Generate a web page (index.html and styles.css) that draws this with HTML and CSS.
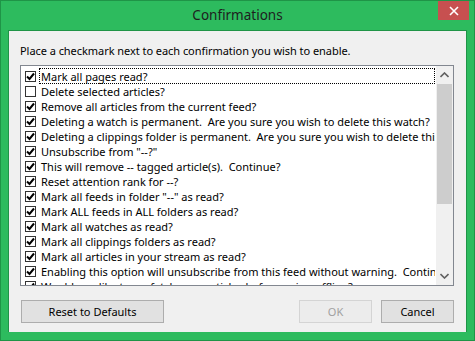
FILE: index.html
```html
<!DOCTYPE html>
<html lang="en">
<head>
    <meta charset="UTF-8">
    <title>Confirmations</title>
    <link rel="stylesheet" href="styles.css">
</head>
<body>
    <div class="window">
        <div class="titlebar">
            <span class="title">Confirmations</span>
            <button class="close-btn">
                <svg width="10" height="10" viewBox="0 0 10 10"><path d="M1 1L9 9M9 1L1 9" stroke="#fff" stroke-width="1.6"/></svg>
            </button>
        </div>
        <div class="client">
            <p class="intro">Place a checkmark next to each confirmation you wish to enable.</p>
            <div class="list">
                <div class="rows">
                    <div class="row focused"><span class="box checked"></span><span class="label">Mark all pages read?</span></div>
                    <div class="row"><span class="box"></span><span class="label">Delete selected articles?</span></div>
                    <div class="row"><span class="box checked"></span><span class="label">Remove all articles from the current feed?</span></div>
                    <div class="row"><span class="box checked"></span><span class="label">Deleting a watch is permanent.&nbsp; Are you sure you wish to delete this watch?</span></div>
                    <div class="row"><span class="box checked"></span><span class="label">Deleting a clippings folder is permanent.&nbsp; Are you sure you wish to delete this clippings folder?</span></div>
                    <div class="row"><span class="box checked"></span><span class="label">Unsubscribe from "--?"</span></div>
                    <div class="row"><span class="box checked"></span><span class="label">This will remove -- tagged article(s).&nbsp; Continue?</span></div>
                    <div class="row"><span class="box checked"></span><span class="label">Reset attention rank for --?</span></div>
                    <div class="row"><span class="box checked"></span><span class="label">Mark all feeds in folder "--" as read?</span></div>
                    <div class="row"><span class="box checked"></span><span class="label">Mark ALL feeds in ALL folders as read?</span></div>
                    <div class="row"><span class="box checked"></span><span class="label">Mark all watches as read?</span></div>
                    <div class="row"><span class="box checked"></span><span class="label">Mark all clippings folders as read?</span></div>
                    <div class="row"><span class="box checked"></span><span class="label">Mark all articles in your stream as read?</span></div>
                    <div class="row"><span class="box checked"></span><span class="label">Enabling this option will unsubscribe from this feed without warning.&nbsp; Continue?</span></div>
                    <div class="row"><span class="box checked"></span><span class="label">Would you like to prefetch your articles before going offline?</span></div>
                </div>
                <div class="scrollbar">
                    <div class="arrow">
                        <svg width="9" height="6" viewBox="0 0 9 6"><path d="M0.5 5L4.5 1L8.5 5" fill="none" stroke="#606060" stroke-width="1.6"/></svg>
                    </div>
                    <div class="track"><div class="thumb"></div></div>
                    <div class="arrow">
                        <svg width="9" height="6" viewBox="0 0 9 6"><path d="M0.5 1L4.5 5L8.5 1" fill="none" stroke="#606060" stroke-width="1.6"/></svg>
                    </div>
                </div>
            </div>
            <div class="actions">
                <button class="btn reset">Reset to Defaults</button>
                <div class="spacer"></div>
                <button class="btn" disabled>OK</button>
                <button class="btn">Cancel</button>
            </div>
        </div>
    </div>
</body>
</html>
```

FILE: styles.css
```css
:root {
    --frame: #2dbb5e;
    --frame-edge: #1f9447;
    --client-bg: #f0f0f0;
    --list-border: #828790;
    --btn-bg: #e1e1e1;
    --btn-border: #adadad;
    --font-main: "Noto Sans", "Open Sans", sans-serif;
}
* { box-sizing: border-box; }
body {
    margin: 0;
    font-family: var(--font-main);
    font-size: 11px;
    color: #000;
}
.window {
    width: 475px;
    height: 341px;
    background: var(--frame);
    border: 1px solid var(--frame-edge);
    display: flex;
    flex-direction: column;
}
.titlebar {
    height: 29px;
    position: relative;
    display: flex;
    justify-content: center;
    align-items: center;
}
.title {
    font-size: 13.5px;
    color: #1e1e1e;
    margin-top: -1px;
}
.close-btn {
    position: absolute;
    top: 0;
    right: 5px;
    width: 31px;
    height: 19px;
    border: none;
    background: #c75050;
    display: flex;
    align-items: center;
    justify-content: center;
    padding: 0;
}
.client {
    margin: 0 7px 8px 7px;
    flex: 1;
    background: var(--client-bg);
    border: 1px solid #1f9447;
    border-width: 1px 1px 0 1px;
    padding: 12px 12px 8px 11px;
    display: flex;
    flex-direction: column;
}
.intro {
    margin: 0 0 6px 0;
    line-height: 16px;
    letter-spacing: -0.05px;
}
.list {
    height: 221px;
    background: #fff;
    border: 1px solid var(--list-border);
    display: flex;
    overflow: hidden;
}
.rows {
    flex: 1;
    padding: 2px 1px 0 4px;
    overflow: hidden;
}
.row {
    height: 15px;
    white-space: nowrap;
    display: flex;
    align-items: center;
    gap: 3px;
}
.label {
    flex: 1;
    line-height: 15px;
    padding: 1px 0 0 2px;
    overflow: hidden;
}
.row.focused .label {
    outline: 1px dotted #000;
    outline-offset: -1px;
}
.box {
    width: 11px;
    height: 11px;
    border: 1px solid #333;
    background: #fff;
    flex-shrink: 0;
    margin-top: 1px;
}
.box.checked {
    background: #fff url("data:image/svg+xml,%3Csvg xmlns='http://www.w3.org/2000/svg' width='9' height='9' viewBox='0 0 9 9'%3E%3Cpath d='M1 4.5L3.5 7L8 1.5' fill='none' stroke='%23000' stroke-width='2'/%3E%3C/svg%3E") center no-repeat;
}
.scrollbar {
    width: 17px;
    flex-shrink: 0;
    background: #f0f0f0;
    display: flex;
    flex-direction: column;
    padding-bottom: 1px;
}
.arrow {
    height: 17px;
    display: flex;
    align-items: center;
    justify-content: center;
}
.track {
    flex: 1;
    padding: 1px 1px;
}
.thumb {
    height: 120px;
    background: #cdcdcd;
}
.actions {
    margin-top: 14px;
    display: flex;
    gap: 9px;
}
.spacer { flex: 1; }
.btn {
    height: 23px;
    width: 73px;
    background: var(--btn-bg);
    border: 1px solid var(--btn-border);
    font-family: var(--font-main);
    font-size: 11px;
    color: #000;
    padding: 0;
}
.btn.reset { width: 143px; margin-left: 1px; }
.btn:disabled {
    background: #ececec;
    border-color: #d4d4d4;
    color: #a0a0a0;
}
```
